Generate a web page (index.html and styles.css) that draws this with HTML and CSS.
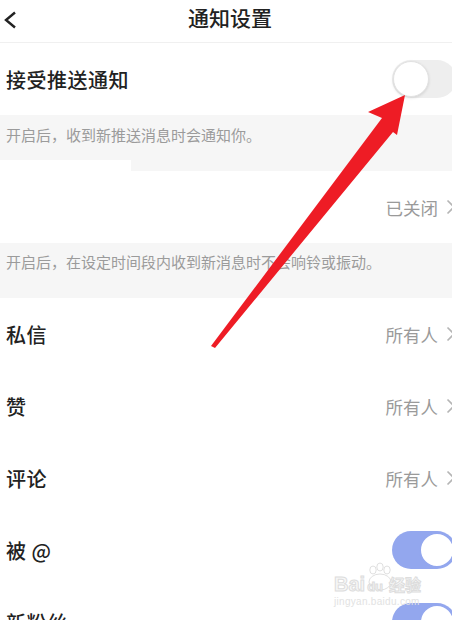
FILE: index.html
```html
<!DOCTYPE html>
<html lang="zh-CN">

<head>
    <meta charset="UTF-8" />
    <meta name="viewport" content="width=device-width, initial-scale=1.0" />
    <title>通知设置</title>
    <link rel="stylesheet" href="styles.css">
</head>

<body>
    <div class="screen">
        <div class="topbar">
            <span class="back">
                <svg width="14" height="18" viewBox="0 0 14 18">
                    <polyline points="12,1.5 3,9 12,16.5" fill="none" stroke="#222" stroke-width="2.4" />
                </svg>
            </span>
            <h1 class="title">通知设置</h1>
        </div>

        <div class="row">
            <span class="label">接受推送通知</span>
            <span class="switch"><span class="knob"></span></span>
        </div>
        <div class="note note-first">开启后，收到新推送消息时会通知你。</div>

        <div class="row row-masked">
            <span class="label"></span>
            <span class="value">已关闭
                <svg class="chev" width="10" height="16" viewBox="0 0 10 16">
                    <polyline points="1.5,1.5 8,8 1.5,14.5" fill="none" stroke="#b5b5b5" stroke-width="1.6" />
                </svg>
            </span>
        </div>
        <div class="note">开启后，在设定时间段内收到新消息时不会响铃或振动。</div>

        <div class="row">
            <span class="label">私信</span>
            <span class="value">所有人
                <svg class="chev" width="10" height="16" viewBox="0 0 10 16">
                    <polyline points="1.5,1.5 8,8 1.5,14.5" fill="none" stroke="#b5b5b5" stroke-width="1.6" />
                </svg>
            </span>
        </div>
        <div class="row">
            <span class="label">赞</span>
            <span class="value">所有人
                <svg class="chev" width="10" height="16" viewBox="0 0 10 16">
                    <polyline points="1.5,1.5 8,8 1.5,14.5" fill="none" stroke="#b5b5b5" stroke-width="1.6" />
                </svg>
            </span>
        </div>
        <div class="row">
            <span class="label">评论</span>
            <span class="value">所有人
                <svg class="chev" width="10" height="16" viewBox="0 0 10 16">
                    <polyline points="1.5,1.5 8,8 1.5,14.5" fill="none" stroke="#b5b5b5" stroke-width="1.6" />
                </svg>
            </span>
        </div>
        <div class="row">
            <span class="label">被 @</span>
            <span class="switch on"><span class="knob"></span></span>
        </div>
        <div class="row">
            <span class="label">新粉丝</span>
            <span class="switch on"><span class="knob"></span></span>
        </div>

        <!-- watermark -->
        <div class="mark">
            <svg class="paw" width="30" height="30" viewBox="0 0 30 30">
                <g fill="#fff" stroke="#e0e0e0" stroke-width="1">
                    <ellipse cx="8" cy="8" rx="3.2" ry="4" />
                    <ellipse cx="15" cy="5" rx="3.2" ry="4" />
                    <ellipse cx="22" cy="8" rx="3.2" ry="4" />
                    <ellipse cx="15" cy="20" rx="11" ry="8" />
                </g>
            </svg>
            <div class="mark-top"><span>Bai</span><span class="du">du</span><span>经验</span></div>
            <div class="mark-url">jingyan.baidu.com</div>
        </div>

        <!-- annotation arrow -->
        <svg class="arrow" width="460" height="620" viewBox="0 0 460 620">
            <polygon points="405,95 368,112 382,118 211,346 215,348 393,132 397,135" fill="#ee1c25" />
        </svg>
    </div>
</body>

</html>
```

FILE: styles.css
```css
html,
body {
    margin: 0;
    overflow: hidden;
    background: #fff;
}

.screen {
    position: relative;
    width: 460px;
    height: 620px;
    font-family: "Noto Sans CJK SC", "Noto Sans", sans-serif;
    color: #222;
}

.topbar {
    height: 43px;
    box-sizing: border-box;
    border-bottom: 1px solid #f0f0f0;
    display: flex;
    align-items: flex-start;
    justify-content: center;
    position: relative;
}

.back {
    position: absolute;
    left: 3px;
    top: 11px;
}

.back svg {
    display: block;
}

.title {
    margin: 0;
    padding-top: 4px;
    font-size: 21px;
    line-height: 26px;
    font-weight: 500;
}

.row {
    height: 72px;
    display: flex;
    align-items: center;
    justify-content: space-between;
    padding: 0 4px 0 6px;
    background: #fff;
}

.row-masked {
    position: relative;
}

.row-masked::before {
    content: "";
    position: absolute;
    left: 0;
    top: -11px;
    width: 131px;
    height: 11px;
    background: #fff;
}

.label {
    font-size: 20px;
    font-weight: 500;
    letter-spacing: 0.5px;
}

.value {
    display: flex;
    align-items: center;
    gap: 8px;
    font-size: 17.5px;
    color: #9a9a9a;
}

.chev {
    display: block;
}

.note {
    background: #f6f6f6;
    height: 55px;
    box-sizing: border-box;
    padding: 9px 6px 0;
    font-size: 15px;
    line-height: 20px;
    color: #9b9b9b;
}

.note-first {
    height: 56px;
    padding-top: 10px;
}

.switch {
    width: 64px;
    height: 38px;
    border-radius: 19px;
    background: #eeeeee;
    display: flex;
    align-items: center;
    box-sizing: border-box;
    padding: 0 1px;
}

.knob {
    width: 36px;
    height: 36px;
    border-radius: 50%;
    background: #fff;
    box-sizing: border-box;
    border: 1px solid #e2e2e2;
    box-shadow: 0 1px 3px rgba(0, 0, 0, 0.12);
}

.switch.on {
    background: #93a7ee;
    justify-content: flex-end;
}

.switch.on .knob {
    border: 2px solid #93a7ee;
    box-shadow: none;
}

.mark {
    position: absolute;
    left: 334px;
    top: 566px;
    width: 96px;
    color: #f7f7f7;
    font-family: "Liberation Sans", sans-serif;
}

.paw {
    position: absolute;
    left: 31px;
    top: -4px;
}

.mark-top {
    position: relative;
    display: flex;
    align-items: flex-end;
    gap: 2px;
    height: 30px;
    font-size: 20px;
    font-weight: bold;
    -webkit-text-stroke: 1px #dddddd;
}

.mark-top .du {
    font-size: 13px;
    margin-bottom: 2px;
}

.mark-top span:last-child {
    font-family: "Noto Sans CJK SC", sans-serif;
    font-size: 16px;
    margin-left: 4px;
}

.mark-url {
    font-size: 10px;
    line-height: 12px;
    color: #e2e2e2;
    letter-spacing: 0.3px;
}

.arrow {
    position: absolute;
    left: 0;
    top: 0;
    pointer-events: none;
}
```
